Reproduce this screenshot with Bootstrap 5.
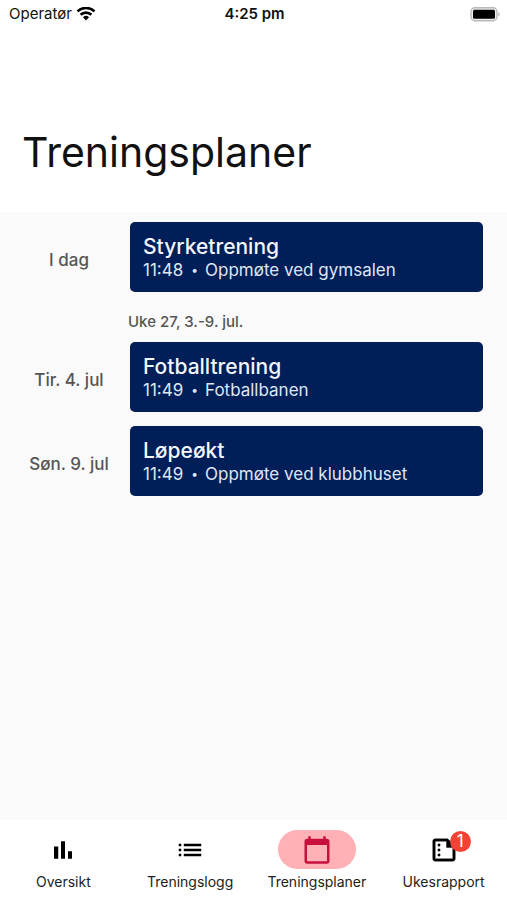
<!DOCTYPE html>
<html lang="nb">
<head>
<meta charset="utf-8">
<meta name="viewport" content="width=device-width, initial-scale=1">
<title>Treningsplaner</title>
<link rel="stylesheet" href="https://cdn.jsdelivr.net/npm/bootstrap@5.3.0/dist/css/bootstrap.min.css">
<style>
  body { font-family: Inter, "Liberation Sans", sans-serif; color: #111; background: #fff; }
  .status-bar { height: 28px; font-size: 15px; line-height: 28px; padding: 0 7px 0 9px; }
  .page-title { font-size: 41px; line-height: 52px; font-weight: 400; color: #111; padding: 98px 22px 34px; }
  .plans { background: #fafafa; padding: 10px 24px 0 0; }
  .plan { margin-bottom: 14px; }
  .plan-day { width: 130px; padding: 8px 4px 0 12px; font-size: 17px; font-weight: 500; color: #555; text-align: center; }
  .plan-card { background: #001e57; color: #f3f6fc; border-radius: 5px; min-height: 70px; padding: 12px 13px; text-decoration: none; }
  .plan-card h2 { font-size: 21px; line-height: 26px; font-weight: 500; }
  .plan-card p { font-size: 17px; line-height: 20px; color: #dfe6f5; }
  .dot { font-size: 12px; margin: 0 7px 0 8px; }
  .week { font-size: 15px; line-height: 20px; font-weight: 500; color: #555; padding: 6px 0 10px 128px; }
  .tab { padding: 10px 0 8px; color: #222; font-size: 14px; line-height: 20px; text-decoration: none; gap: 3px; }
  .tab-icon { width: 78px; height: 39px; border-radius: 20px; color: #000; }
  .tab-icon svg { width: 30px; height: 30px; fill: currentColor; }
  .tab-icon.current { background: #ffb1b5; color: #c8103e; }
  .count { top: 1px; left: 45px; width: 21px; height: 21px; border-radius: 50%; background: #f44336; color: #fff; font-size: 17px; line-height: 21px; }
</style>
<script src="https://cdn.jsdelivr.net/npm/bootstrap@5.3.0/dist/js/bootstrap.bundle.min.js"></script>
</head>
<body class="d-flex flex-column min-vh-100">
<header>
  <div class="status-bar row g-0">
    <div class="col d-flex align-items-center gap-1">
      <span>Operatør</span>
      <svg width="20" height="15" viewBox="0 0 20 15" fill="none" stroke="#000" stroke-width="2.6" aria-hidden="true"><path d="M1.500 4.400a12.200 12.200 0 0 1 17 0M4.600 7.800a7.700 7.700 0 0 1 10.800 0"/><path d="M10 13.500l-3-3.200a4.300 4.300 0 0 1 6 0z" fill="#000" stroke="none"/></svg>
    </div>
    <div class="col-auto fw-semibold">4:25 pm</div>
    <div class="col d-flex align-items-center justify-content-end">
      <svg width="30" height="15" viewBox="0 0 30 15" aria-hidden="true"><rect x="1" y="0.700" width="26" height="13" rx="4" fill="#eee" stroke="#b9b9b9" stroke-width="1.400"/><rect x="3" y="2.700" width="22" height="9" rx="1.500" fill="#000"/><path d="M28.400 5.200c1.600.6 1.600 3.600 0 4.200z" fill="#aaa"/></svg>
    </div>
  </div>
  <h1 class="page-title m-0">Treningsplaner</h1>
</header>
<main class="plans flex-grow-1">
  <section class="plan d-flex align-items-center">
    <div class="plan-day flex-shrink-0">I dag</div>
    <a href="#styrke" class="plan-card flex-grow-1"><h2 class="m-0">Styrketrening</h2><p class="m-0 d-flex align-items-center">11:48<span class="dot">•</span>Oppmøte ved gymsalen</p></a>
  </section>
  <div class="week">Uke 27, 3.-9. jul.</div>
  <section class="plan d-flex align-items-center">
    <div class="plan-day flex-shrink-0">Tir. 4. jul</div>
    <a href="#fotball" class="plan-card flex-grow-1"><h2 class="m-0">Fotballtrening</h2><p class="m-0 d-flex align-items-center">11:49<span class="dot">•</span>Fotballbanen</p></a>
  </section>
  <section class="plan d-flex align-items-center">
    <div class="plan-day flex-shrink-0">Søn. 9. jul</div>
    <a href="#lop" class="plan-card flex-grow-1"><h2 class="m-0">Løpeøkt</h2><p class="m-0 d-flex align-items-center">11:49<span class="dot">•</span>Oppmøte ved klubbhuset</p></a>
  </section>
</main>
<nav class="row g-0 text-center">
  <a href="#oversikt" class="tab col-3 d-flex flex-column align-items-center">
    <span class="tab-icon d-flex align-items-center justify-content-center"><svg viewBox="0 0 24 24" aria-hidden="true"><path d="M4.800 9.200h3.400V19H4.800zM10.400 5h3.200v14h-3.200zm5.600 8h3.200v6H16z"/></svg></span>
    <span>Oversikt</span>
  </a>
  <a href="#logg" class="tab col-3 d-flex flex-column align-items-center">
    <span class="tab-icon d-flex align-items-center justify-content-center"><svg viewBox="0 0 24 24" aria-hidden="true"><path d="M3 13h2v-2H3v2zm0 4h2v-2H3v2zm0-8h2V7H3v2zm4 4h14v-2H7v2zm0 4h14v-2H7v2zM7 7v2h14V7H7z"/></svg></span>
    <span>Treningslogg</span>
  </a>
  <a href="#planer" class="tab col-3 d-flex flex-column align-items-center" aria-current="page">
    <span class="tab-icon current d-flex align-items-center justify-content-center"><svg viewBox="0 0 24 24" aria-hidden="true"><path d="M20 3h-1V1h-2v2H7V1H5v2H4c-1.100 0-2 .9-2 2v16c0 1.100.9 2 2 2h16c1.100 0 2-.9 2-2V5c0-1.100-.9-2-2-2zm0 18H4V8h16v13z"/></svg></span>
    <span>Treningsplaner</span>
  </a>
  <a href="#rapport" class="tab col-3 d-flex flex-column align-items-center">
    <span class="tab-icon position-relative d-flex align-items-center justify-content-center"><svg viewBox="0 0 24 24" stroke="currentColor" stroke-width="0.300" aria-hidden="true"><path d="M15 3H5c-1.100 0-2 .9-2 2v14c0 1.100.9 2 2 2h14c1.100 0 2-.9 2-2V9l-6-6zM5 19V5h9v5h5v9H5zM8 7a1 1 0 1 0 0 2 1 1 0 0 0 0-2zm0 4a1 1 0 1 0 0 2 1 1 0 0 0 0-2zm0 4a1 1 0 1 0 0 2 1 1 0 0 0 0-2z"/></svg><span class="count position-absolute">1</span></span>
    <span>Ukesrapport</span>
  </a>
</nav>
</body>
</html>
